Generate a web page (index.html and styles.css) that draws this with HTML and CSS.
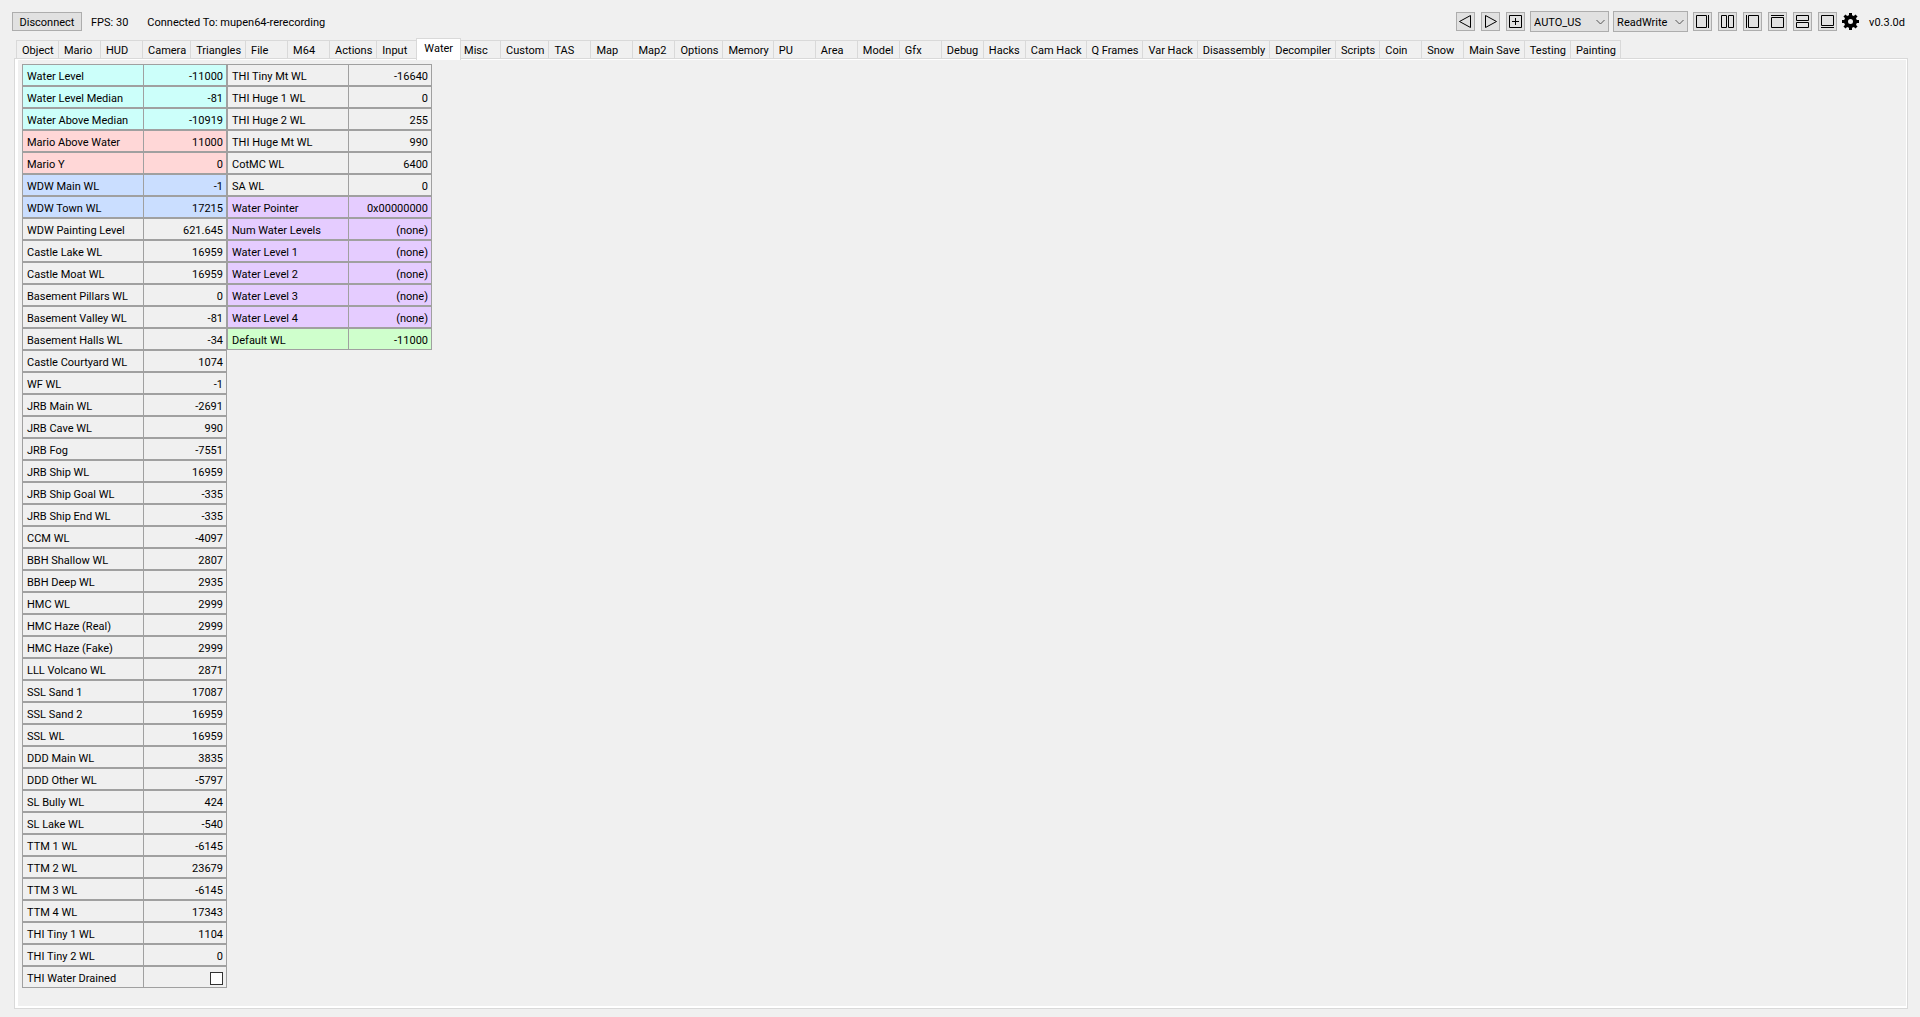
FILE: index.html
```html
<!DOCTYPE html>
<html lang="en">
<head>
  <meta charset="UTF-8">
  <meta name="viewport" content="width=device-width, initial-scale=1.0">
  <title>Water</title>
  <link rel="stylesheet" href="styles.css">
</head>
<body>
  <header class="toolbar">
    <button class="disconnect-btn" type="button">Disconnect</button>
    <span class="fps">FPS: 30</span>
    <span class="connected">Connected To: mupen64-rerecording</span>

    <div class="tools">
      <div class="icon-group">
        <button class="icon-btn" type="button" aria-label="Move tab left">
          <svg width="17" height="17" viewBox="0 0 17 17"><path d="M13.5 2.5v12L2.5 8.5z"/></svg>
        </button>
        <button class="icon-btn" type="button" aria-label="Move tab right">
          <svg width="17" height="17" viewBox="0 0 17 17"><path d="M3.5 2.5v12l11-6z"/></svg>
        </button>
        <button class="icon-btn" type="button" aria-label="Add tab">
          <svg width="17" height="17" viewBox="0 0 17 17"><path d="M2.5 2.5h12v12h-12zM8.5 5v7M5 8.5h7"/></svg>
        </button>
      </div>
      <div class="select-group">
        <div class="select-box rom">
          <select aria-label="ROM version">
            <option>AUTO_US</option>
            <option>US</option>
            <option>JP</option>
          </select>
          <svg class="chevron" width="9" height="6" viewBox="0 0 9 6"><path d="M.5 1l4 4 4-4"/></svg>
        </div>
        <div class="select-box mode">
          <select aria-label="Access mode">
            <option>ReadWrite</option>
            <option>ReadOnly</option>
          </select>
          <svg class="chevron" width="9" height="6" viewBox="0 0 9 6"><path d="M.5 1l4 4 4-4"/></svg>
        </div>
      </div>
      <div class="icon-group">
        <button class="icon-btn" type="button" aria-label="Hide right panel">
          <svg width="17" height="17" viewBox="0 0 17 17"><path d="M2.5 2.5h10v12h-10zM14.5 2v13"/></svg>
        </button>
        <button class="icon-btn" type="button" aria-label="Split left and right">
          <svg width="17" height="17" viewBox="0 0 17 17"><path d="M2.5 2.5h5v12h-5zM9.5 2.5h5v12h-5z"/></svg>
        </button>
        <button class="icon-btn" type="button" aria-label="Hide left panel">
          <svg width="17" height="17" viewBox="0 0 17 17"><path d="M4.5 2.5h10v12h-10zM2.5 2v13"/></svg>
        </button>
        <button class="icon-btn" type="button" aria-label="Hide top panel">
          <svg width="17" height="17" viewBox="0 0 17 17"><path d="M2.5 4.5h12v10h-12zM2 2.5h13"/></svg>
        </button>
        <button class="icon-btn" type="button" aria-label="Split top and bottom">
          <svg width="17" height="17" viewBox="0 0 17 17"><path d="M2.5 2.5h12v5h-12zM2.5 9.5h12v5h-12z"/></svg>
        </button>
        <button class="icon-btn" type="button" aria-label="Hide bottom panel">
          <svg width="17" height="17" viewBox="0 0 17 17"><path d="M2.5 2.5h12v10h-12zM2 14.5h13"/></svg>
        </button>
      </div>
      <button class="gear-btn" type="button" aria-label="Settings">
        <svg width="17" height="17" viewBox="0 0 17 17">
          <path d="M7 0h3v17h-3zM0 7h17v3h-17z"/>
          <path d="M7 0h3v17h-3zM0 7h17v3h-17z" transform="rotate(45 8.5 8.5)"/>
          <circle class="ring" cx="8.5" cy="8.5" r="4.5"/>
        </svg>
      </button>
      <span class="version">v0.3.0d</span>
    </div>
  </header>

  <nav class="tabs">
    <button class="tab" type="button">Object</button>
    <button class="tab" type="button">Mario</button>
    <button class="tab" type="button">HUD</button>
    <button class="tab" type="button">Camera</button>
    <button class="tab" type="button">Triangles</button>
    <button class="tab" type="button">File</button>
    <button class="tab" type="button">M64</button>
    <button class="tab" type="button">Actions</button>
    <button class="tab" type="button">Input</button>
    <button class="tab active" type="button">Water</button>
    <button class="tab" type="button">Misc</button>
    <button class="tab" type="button">Custom</button>
    <button class="tab" type="button">TAS</button>
    <button class="tab" type="button">Map</button>
    <button class="tab" type="button">Map2</button>
    <button class="tab" type="button">Options</button>
    <button class="tab" type="button">Memory</button>
    <button class="tab" type="button">PU</button>
    <button class="tab" type="button">Area</button>
    <button class="tab" type="button">Model</button>
    <button class="tab" type="button">Gfx</button>
    <button class="tab" type="button">Debug</button>
    <button class="tab" type="button">Hacks</button>
    <button class="tab" type="button">Cam Hack</button>
    <button class="tab" type="button">Q Frames</button>
    <button class="tab" type="button">Var Hack</button>
    <button class="tab" type="button">Disassembly</button>
    <button class="tab" type="button">Decompiler</button>
    <button class="tab" type="button">Scripts</button>
    <button class="tab" type="button">Coin</button>
    <button class="tab" type="button">Snow</button>
    <button class="tab" type="button">Main Save</button>
    <button class="tab" type="button">Testing</button>
    <button class="tab" type="button">Painting</button>
  </nav>

  <main class="panel">
    <table class="vars">
      <tr class="cyan"><th>Water Level</th><td>-11000</td></tr>
      <tr class="cyan"><th>Water Level Median</th><td>-81</td></tr>
      <tr class="cyan"><th>Water Above Median</th><td>-10919</td></tr>
      <tr class="red"><th>Mario Above Water</th><td>11000</td></tr>
      <tr class="red"><th>Mario Y</th><td>0</td></tr>
      <tr class="blue"><th>WDW Main WL</th><td>-1</td></tr>
      <tr class="blue"><th>WDW Town WL</th><td>17215</td></tr>
      <tr><th>WDW Painting Level</th><td>621.645</td></tr>
      <tr><th>Castle Lake WL</th><td>16959</td></tr>
      <tr><th>Castle Moat WL</th><td>16959</td></tr>
      <tr><th>Basement Pillars WL</th><td>0</td></tr>
      <tr><th>Basement Valley WL</th><td>-81</td></tr>
      <tr><th>Basement Halls WL</th><td>-34</td></tr>
      <tr><th>Castle Courtyard WL</th><td>1074</td></tr>
      <tr><th>WF WL</th><td>-1</td></tr>
      <tr><th>JRB Main WL</th><td>-2691</td></tr>
      <tr><th>JRB Cave WL</th><td>990</td></tr>
      <tr><th>JRB Fog</th><td>-7551</td></tr>
      <tr><th>JRB Ship WL</th><td>16959</td></tr>
      <tr><th>JRB Ship Goal WL</th><td>-335</td></tr>
      <tr><th>JRB Ship End WL</th><td>-335</td></tr>
      <tr><th>CCM WL</th><td>-4097</td></tr>
      <tr><th>BBH Shallow WL</th><td>2807</td></tr>
      <tr><th>BBH Deep WL</th><td>2935</td></tr>
      <tr><th>HMC WL</th><td>2999</td></tr>
      <tr><th>HMC Haze (Real)</th><td>2999</td></tr>
      <tr><th>HMC Haze (Fake)</th><td>2999</td></tr>
      <tr><th>LLL Volcano WL</th><td>2871</td></tr>
      <tr><th>SSL Sand 1</th><td>17087</td></tr>
      <tr><th>SSL Sand 2</th><td>16959</td></tr>
      <tr><th>SSL WL</th><td>16959</td></tr>
      <tr><th>DDD Main WL</th><td>3835</td></tr>
      <tr><th>DDD Other WL</th><td>-5797</td></tr>
      <tr><th>SL Bully WL</th><td>424</td></tr>
      <tr><th>SL Lake WL</th><td>-540</td></tr>
      <tr><th>TTM 1 WL</th><td>-6145</td></tr>
      <tr><th>TTM 2 WL</th><td>23679</td></tr>
      <tr><th>TTM 3 WL</th><td>-6145</td></tr>
      <tr><th>TTM 4 WL</th><td>17343</td></tr>
      <tr><th>THI Tiny 1 WL</th><td>1104</td></tr>
      <tr><th>THI Tiny 2 WL</th><td>0</td></tr>
      <tr><th><label for="thi-drained">THI Water Drained</label></th><td><input type="checkbox" id="thi-drained"></td></tr>
    </table>

    <table class="vars">
      <tr><th>THI Tiny Mt WL</th><td>-16640</td></tr>
      <tr><th>THI Huge 1 WL</th><td>0</td></tr>
      <tr><th>THI Huge 2 WL</th><td>255</td></tr>
      <tr><th>THI Huge Mt WL</th><td>990</td></tr>
      <tr><th>CotMC WL</th><td>6400</td></tr>
      <tr><th>SA WL</th><td>0</td></tr>
      <tr class="purple"><th>Water Pointer</th><td>0x00000000</td></tr>
      <tr class="purple"><th>Num Water Levels</th><td>(none)</td></tr>
      <tr class="purple"><th>Water Level 1</th><td>(none)</td></tr>
      <tr class="purple"><th>Water Level 2</th><td>(none)</td></tr>
      <tr class="purple"><th>Water Level 3</th><td>(none)</td></tr>
      <tr class="purple"><th>Water Level 4</th><td>(none)</td></tr>
      <tr class="green"><th>Default WL</th><td>-11000</td></tr>
    </table>
  </main>
</body>
</html>
```

FILE: styles.css
```css
* {
  box-sizing: border-box;
}
body {
  display: flex;
  flex-direction: column;
  min-height: 100vh;
  margin: 0;
  padding: 11px 12px 8px 12px;
  background-color: #f0f0f0;
  color: #000;
  font-family: Roboto, "Liberation Sans", Arial, sans-serif;
  font-size: 11px;
  line-height: 13px;
}
button,
select {
  margin: 0;
  color: inherit;
  font: inherit;
}

/* toolbar */
.toolbar {
  display: flex;
  align-items: center;
  height: 21px;
}
.toolbar span {
  padding-top: 1px;
}
.disconnect-btn {
  width: 70px;
  height: 19px;
  padding: 1px 0 0 0;
  border: 1px solid #adadad;
  background-color: #e1e1e1;
}
.fps {
  margin-left: 9px;
}
.connected {
  margin-left: 19px;
}
.tools {
  display: flex;
  align-items: center;
  gap: 5px;
  margin-left: auto;
  margin-right: 3px;
}
.icon-group {
  display: flex;
  gap: 6px;
}
.icon-btn {
  width: 19px;
  height: 19px;
  padding: 0;
  border: 1px solid #adadad;
  background-color: #e1e1e1;
}
.icon-btn svg,
.gear-btn svg {
  display: block;
}
.icon-btn path {
  fill: none;
  stroke: #000;
}
.gear-btn {
  padding: 0;
  border: none;
  background: none;
}
.gear-btn .ring {
  fill: #f0f0f0;
  stroke: #000;
  stroke-width: 4px;
}
.version {
  margin-left: 5px;
}

/* drop-downs */
.select-group {
  display: flex;
  gap: 4px;
}
.select-box {
  display: grid;
  align-items: center;
}
.select-box select,
.chevron {
  grid-area: 1 / 1;
}
.select-box select {
  appearance: none;
  width: 100%;
  height: 21px;
  padding: 1px 3px 0 3px;
  border: 1px solid #adadad;
  border-radius: 0;
  background-color: #e1e1e1;
}
.rom {
  width: 79px;
}
.mode {
  width: 75px;
}
.chevron {
  justify-self: end;
  margin-right: 4px;
  pointer-events: none;
}
.chevron path {
  fill: none;
  stroke: #555;
}

/* tabs */
.tabs {
  display: flex;
  align-items: flex-end;
  height: 26px;
  margin-left: 4px;
}
.tab {
  flex: none;
  min-width: 43px;
  height: 18px;
  margin-right: -1px;
  padding: 1px 4px 0 5px;
  border: 1px solid #d9d9d9;
  border-bottom: none;
  background-color: #f0f0f0;
  text-align: left;
}
.tab.active {
  z-index: 1;
  height: 22px;
  margin: 0 -3px -2px -2px;
  padding: 0 7px 2px 7px;
  background-color: #fff;
}

/* variable tables */
.panel {
  display: flex;
  flex: 1;
  align-items: flex-start;
  margin-left: 2px;
  padding: 5px 0 18px 7px;
  border: 1px solid #d9d9d9;
  box-shadow: inset 3px 1px #fff, inset -1px -2px #fff;
}
.vars {
  border-spacing: 0;
}
.vars th,
.vars td {
  height: 22px;
  padding: 2px 3px 0 4px;
  border: 1px solid #a0a0a0;
  font-weight: normal;
}
.vars th {
  width: 121px;
  border-right: none;
  text-align: left;
}
.vars td {
  width: 84px;
  text-align: right;
}
.vars input {
  appearance: none;
  display: block;
  width: 13px;
  height: 13px;
  margin: 0 0 0 auto;
  border: 1px solid #333;
  background-color: #fff;
}
.cyan {
  background-color: #ccfffa;
}
.red {
  background-color: #ffd7d7;
}
.blue {
  background-color: #cadeff;
}
.purple {
  background-color: #e5ccff;
}
.green {
  background-color: #cfffcc;
}
```
